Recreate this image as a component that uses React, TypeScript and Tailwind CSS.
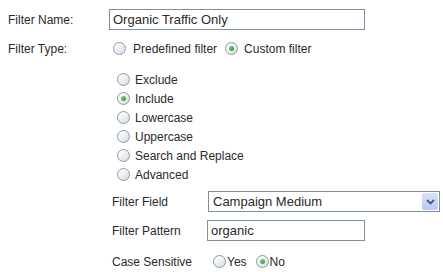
import React from "react"

function Radio({ checked = false }: { checked?: boolean }) {
  return (
    <span className="relative inline-flex h-[13px] w-[13px] shrink-0 items-center justify-center rounded-full border border-[#8c9aab] bg-gradient-to-br from-[#ffffff] via-[#eef0f3] to-[#d4d9e0]">
      {checked && (
        <span className="h-[5px] w-[5px] rounded-full bg-gradient-to-br from-[#7fd77a] to-[#1f9a2a]" />
      )}
    </span>
  )
}

function RadioOption({ label, checked = false, gap = "gap-[7px]" }: { label: string; checked?: boolean; gap?: string }) {
  return (
    <label className={`flex items-center ${gap}`}>
      <Radio checked={checked} />
      <span>{label}</span>
    </label>
  )
}

export default function App() {
  const actions = [
    { name: "Exclude", checked: false },
    { name: "Include", checked: true },
    { name: "Lowercase", checked: false },
    { name: "Uppercase", checked: false },
    { name: "Search and Replace", checked: false },
    { name: "Advanced", checked: false },
  ]

  return (
    <div
      className="h-[272px] w-[443px] bg-white pl-[8px] pt-[9px] text-[12px] leading-none text-[#2a2a2a]"
      style={{ fontFamily: '"Liberation Sans", Arial, sans-serif' }}
    >
      {/* Filter Name */}
      <div className="flex items-center">
        <div className="w-[101px]">Filter Name:</div>
        <div className="flex h-[21px] w-[256px] items-center border border-[#7f8fa0] px-[3px] text-[13px]">
          Organic Traffic Only
        </div>
      </div>

      {/* Filter Type */}
      <div className="mt-[12px] flex items-center">
        <div className="w-[105px]">Filter Type:</div>
        <div className="flex items-center gap-[8px]">
          <RadioOption label="Predefined filter" gap="gap-[7px]" />
          <RadioOption label="Custom filter" checked gap="gap-[6px]" />
        </div>
      </div>

      <div className="ml-[109px] mt-[18px] flex flex-col gap-[6px]">
        {actions.map((a) => (
          <RadioOption key={a.name} label={a.name} checked={a.checked} gap="gap-[5px]" />
        ))}
      </div>

      <div className="ml-[104px] mt-[10px] flex flex-col">
        <div className="flex items-center">
          <div className="w-[96px]">Filter Field</div>
          <div className="flex h-[21px] w-[232px] items-center justify-between border border-[#7f8fa0] pl-[4px] pr-[1px] text-[13px]">
            <span>Campaign Medium</span>
            <span className="flex h-[17px] w-[16px] items-center justify-center rounded-[2px] bg-gradient-to-b from-[#d8e2fb] to-[#b9c9f2]">
              <svg width="9" height="6" viewBox="0 0 9 6">
                <path d="M1 1 L4.5 4.5 L8 1" fill="none" stroke="#4a5a7a" strokeWidth="1.8" />
              </svg>
            </span>
          </div>
        </div>
        <div className="mt-[8px] flex items-center">
          <div className="w-[95px]">Filter Pattern</div>
          <div className="flex h-[21px] w-[158px] items-center border border-[#7f8fa0] px-[3px] text-[13px]">
            organic
          </div>
        </div>
        <div className="mt-[14px] flex items-center">
          <div className="w-[101px]">Case Sensitive</div>
          <div className="flex items-center gap-[9px]">
            <RadioOption label="Yes" gap="gap-[1px]" />
            <RadioOption label="No" checked gap="gap-[1px]" />
          </div>
        </div>
      </div>
    </div>
  )
}
